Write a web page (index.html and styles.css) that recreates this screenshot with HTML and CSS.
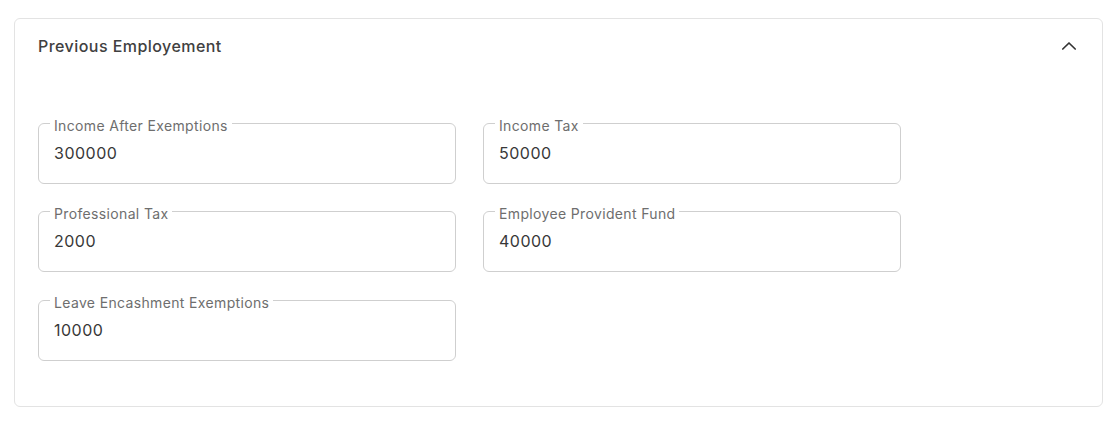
FILE: index.html
```html
<!DOCTYPE html>
<html>
<head>
<meta charset="utf-8">
<link rel="stylesheet" href="styles.css">
</head>
<body>
<section class="card">
  <div class="card-header">
    <h2 class="title">Previous Employement</h2>
    <svg class="chevron" width="24" height="24" viewBox="0 0 24 24"><path d="M5.8 15 L12 9 L18.2 15" fill="none" stroke="#333" stroke-width="1.7" stroke-linecap="round" stroke-linejoin="round"/></svg>
  </div>
  <div class="card-body">
    <div class="grid">
      <fieldset class="field"><legend>Income After Exemptions</legend><div class="value">300000</div></fieldset>
      <fieldset class="field"><legend>Income Tax</legend><div class="value">50000</div></fieldset>
      <fieldset class="field"><legend>Professional Tax</legend><div class="value">2000</div></fieldset>
      <fieldset class="field"><legend>Employee Provident Fund</legend><div class="value">40000</div></fieldset>
      <fieldset class="field"><legend>Leave Encashment Exemptions</legend><div class="value">10000</div></fieldset>
    </div>
  </div>
</section>
</body>
</html>
```
FILE: styles.css
```css
* { box-sizing: border-box; }
html, body { margin: 0; padding: 0; background: #fff; }
body { font-family: Inter, "Noto Sans", sans-serif; color: #333; }
.card {
  margin: 18px 14px;
  height: 389px;
  border: 1px solid #e3e3e3;
  border-radius: 6px;
  background: #fff;
}
.card-header {
  display: flex;
  align-items: center;
  justify-content: space-between;
  padding: 15px 21px 15px 23px;
}
.title {
  margin: 0;
  font-size: 16px;
  font-weight: 500;
  line-height: 24px;
  letter-spacing: 0.45px;
  color: #404040;
}
.chevron { display: block; }
.card-body { padding: 37px 23px 0 23px; }
.grid {
  display: grid;
  grid-template-columns: 418px 418px;
  column-gap: 27px;
  row-gap: 14px;
}
.field {
  margin: 0;
  min-width: 0;
  height: 74px;
  border: 1px solid #cfcfcf;
  border-radius: 6px;
  padding: 0 15px;
}
.field legend {
  padding: 6px 4px 0 4px;
  margin-left: -4px;
  font-size: 14px;
  line-height: 20px;
  letter-spacing: 0.35px;
  color: #6e6e6e;
}
.value {
  margin-top: 5px;
  font-size: 16px;
  line-height: 24px;
  letter-spacing: 0.5px;
  color: #383838;
}
.grid .field:nth-child(5) { margin-top: 1px; }
```
